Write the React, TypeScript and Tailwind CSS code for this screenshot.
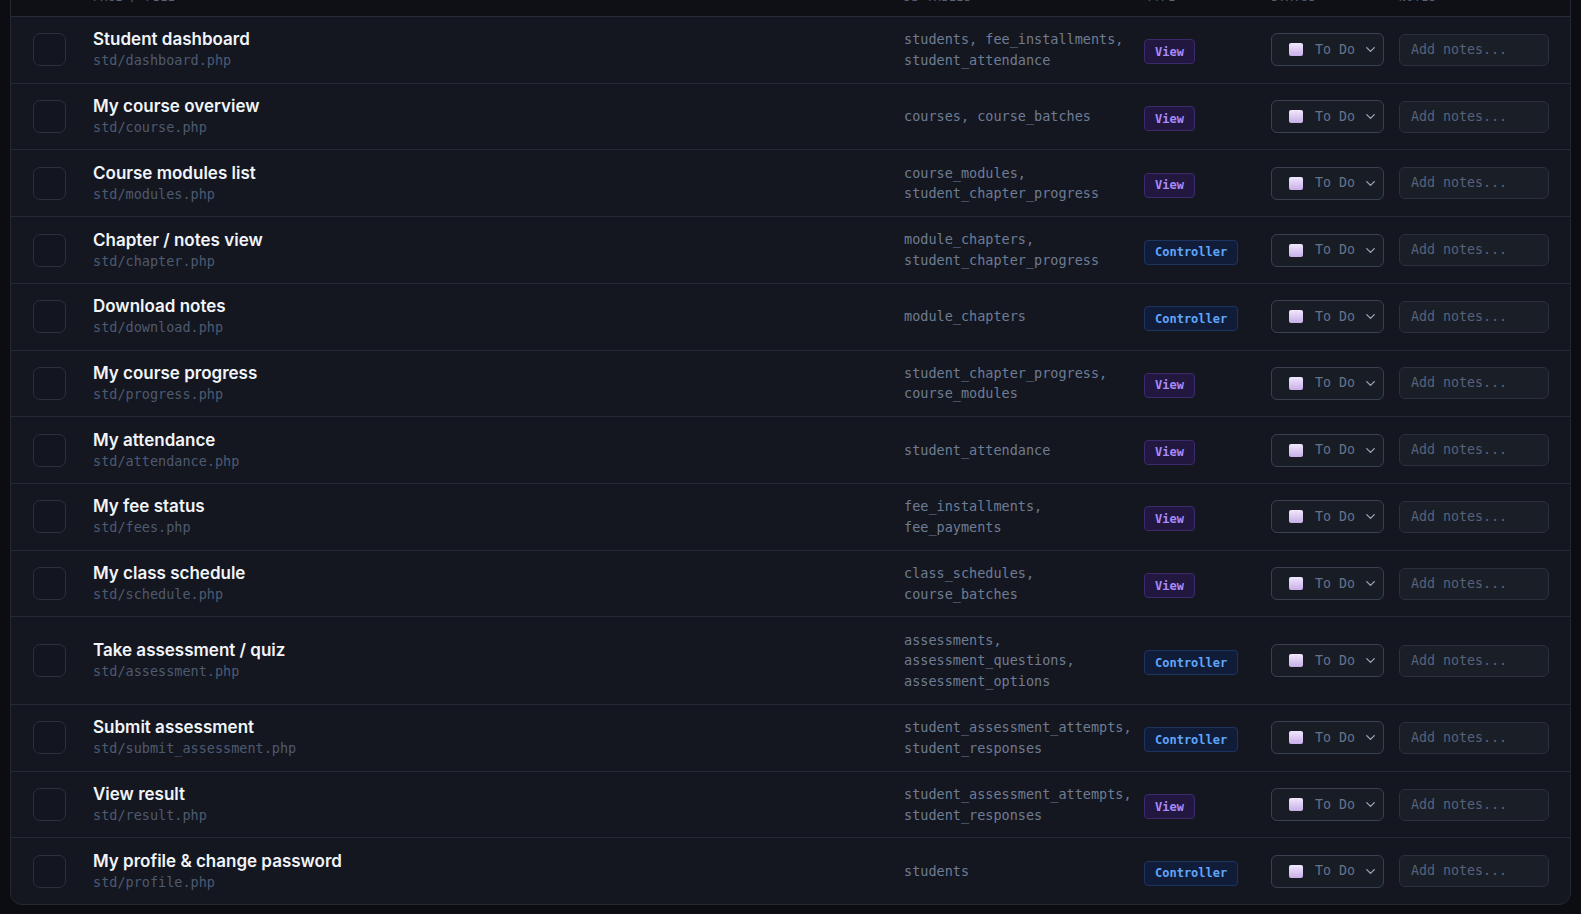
import { ChevronDown } from "lucide-react";

type Row = {
  title: string;
  file: string;
  tables: string[];
  type: "View" | "Controller";
};

const rows: Row[] = [
  { title: "Student dashboard", file: "std/dashboard.php", tables: ["students, fee_installments,", "student_attendance"], type: "View" },
  { title: "My course overview", file: "std/course.php", tables: ["courses, course_batches"], type: "View" },
  { title: "Course modules list", file: "std/modules.php", tables: ["course_modules,", "student_chapter_progress"], type: "View" },
  { title: "Chapter / notes view", file: "std/chapter.php", tables: ["module_chapters,", "student_chapter_progress"], type: "Controller" },
  { title: "Download notes", file: "std/download.php", tables: ["module_chapters"], type: "Controller" },
  { title: "My course progress", file: "std/progress.php", tables: ["student_chapter_progress,", "course_modules"], type: "View" },
  { title: "My attendance", file: "std/attendance.php", tables: ["student_attendance"], type: "View" },
  { title: "My fee status", file: "std/fees.php", tables: ["fee_installments,", "fee_payments"], type: "View" },
  { title: "My class schedule", file: "std/schedule.php", tables: ["class_schedules,", "course_batches"], type: "View" },
  { title: "Take assessment / quiz", file: "std/assessment.php", tables: ["assessments,", "assessment_questions,", "assessment_options"], type: "Controller" },
  { title: "Submit assessment", file: "std/submit_assessment.php", tables: ["student_assessment_attempts,", "student_responses"], type: "Controller" },
  { title: "View result", file: "std/result.php", tables: ["student_assessment_attempts,", "student_responses"], type: "View" },
  { title: "My profile & change password", file: "std/profile.php", tables: ["students"], type: "Controller" },
];

const mono = "font-['DejaVu_Sans_Mono','Liberation_Mono',monospace]";
const cols = "grid grid-cols-[82px_1fr_240px_127px_128px_150px] pr-[21px]";

const TypeBadge = ({ type }: { type: Row["type"] }) =>
  type === "View" ? (
    <span className={`${mono} mt-1 inline-block rounded border border-[#3b2a6e] bg-[#22173f] px-[10px] py-[3.5px] text-[12px] font-bold leading-[16px] text-[#a78bfa]`}>
      View
    </span>
  ) : (
    <span className={`${mono} mt-1 inline-block rounded border border-[#1d3463] bg-[#111d38] px-[10px] py-[3.5px] text-[12px] font-bold leading-[16px] text-[#60a5fa]`}>
      Controller
    </span>
  );

const StatusSelect = () => (
  <div className="flex h-[33px] w-[113px] items-center rounded-md border border-[#394151] bg-[#181c25] pl-[17px] pr-[5px]">
    <span className="h-[13px] w-[14px] rounded-[2px] bg-gradient-to-b from-[#f1e8fc] to-[#c9aee9]" />
    <span className={`${mono} ml-[12px] flex-1 text-[13.3px] text-[#66728a]`}>To Do</span>
    <ChevronDown size={15} strokeWidth={2.2} className="text-[#9aa3b5]" />
  </div>
);

const App = () => {
  return (
    <div className="min-h-[914px] overflow-hidden bg-[#0b0d12] px-[10px] pb-[10px]">
      <div className="-mt-[25px] overflow-hidden rounded-[12px] border border-[#232833] bg-[#141720]">
        <div className={`${cols} ${mono} h-[41px] items-end border-b border-[#262c38] bg-[#0e1015] pb-[10px] text-[11px] uppercase leading-[16px] tracking-[0.08em] text-[#5b6478]`}>
          <div />
          <div>Page / File</div>
          <div>DB Tables</div>
          <div className="pl-[2px]">Type</div>
          <div>Status</div>
          <div>Notes</div>
        </div>
        {rows.map((r, i) => (
          <div
            key={r.file}
            className={`${cols} items-center py-[12.3px] ${i < rows.length - 1 ? "border-b border-[#252a35]" : ""}`}
          >
            <div className="pl-[22px]">
              <div className="h-[33px] w-[33px] rounded-[7px] border border-[#2b303b] bg-[#131620]" />
            </div>
            <div className="flex min-h-[40.6px] flex-col">
              <div className="font-['Inter',sans-serif] text-[17px] font-semibold leading-[21px] text-[#f1f4f9]">{r.title}</div>
              <div className={`${mono} text-[13.5px] leading-[20px] text-[#4e5a70]`}>{r.file}</div>
            </div>
            <div className={`${mono} text-[13.5px] leading-[20.6px] text-[#6f7c93]`}>
              {r.tables.map((t) => (
                <div key={t}>{t}</div>
              ))}
            </div>
            <div>
              <TypeBadge type={r.type} />
            </div>
            <div>
              <StatusSelect />
            </div>
            <div className="flex h-[32px] items-center rounded-md border border-[#2a303c] bg-[#1a1e27] pl-[11px]">
              <span className={`${mono} text-[13.3px] text-[#56627a]`}>Add notes...</span>
            </div>
          </div>
        ))}
      </div>
    </div>
  );
};

export default App;
